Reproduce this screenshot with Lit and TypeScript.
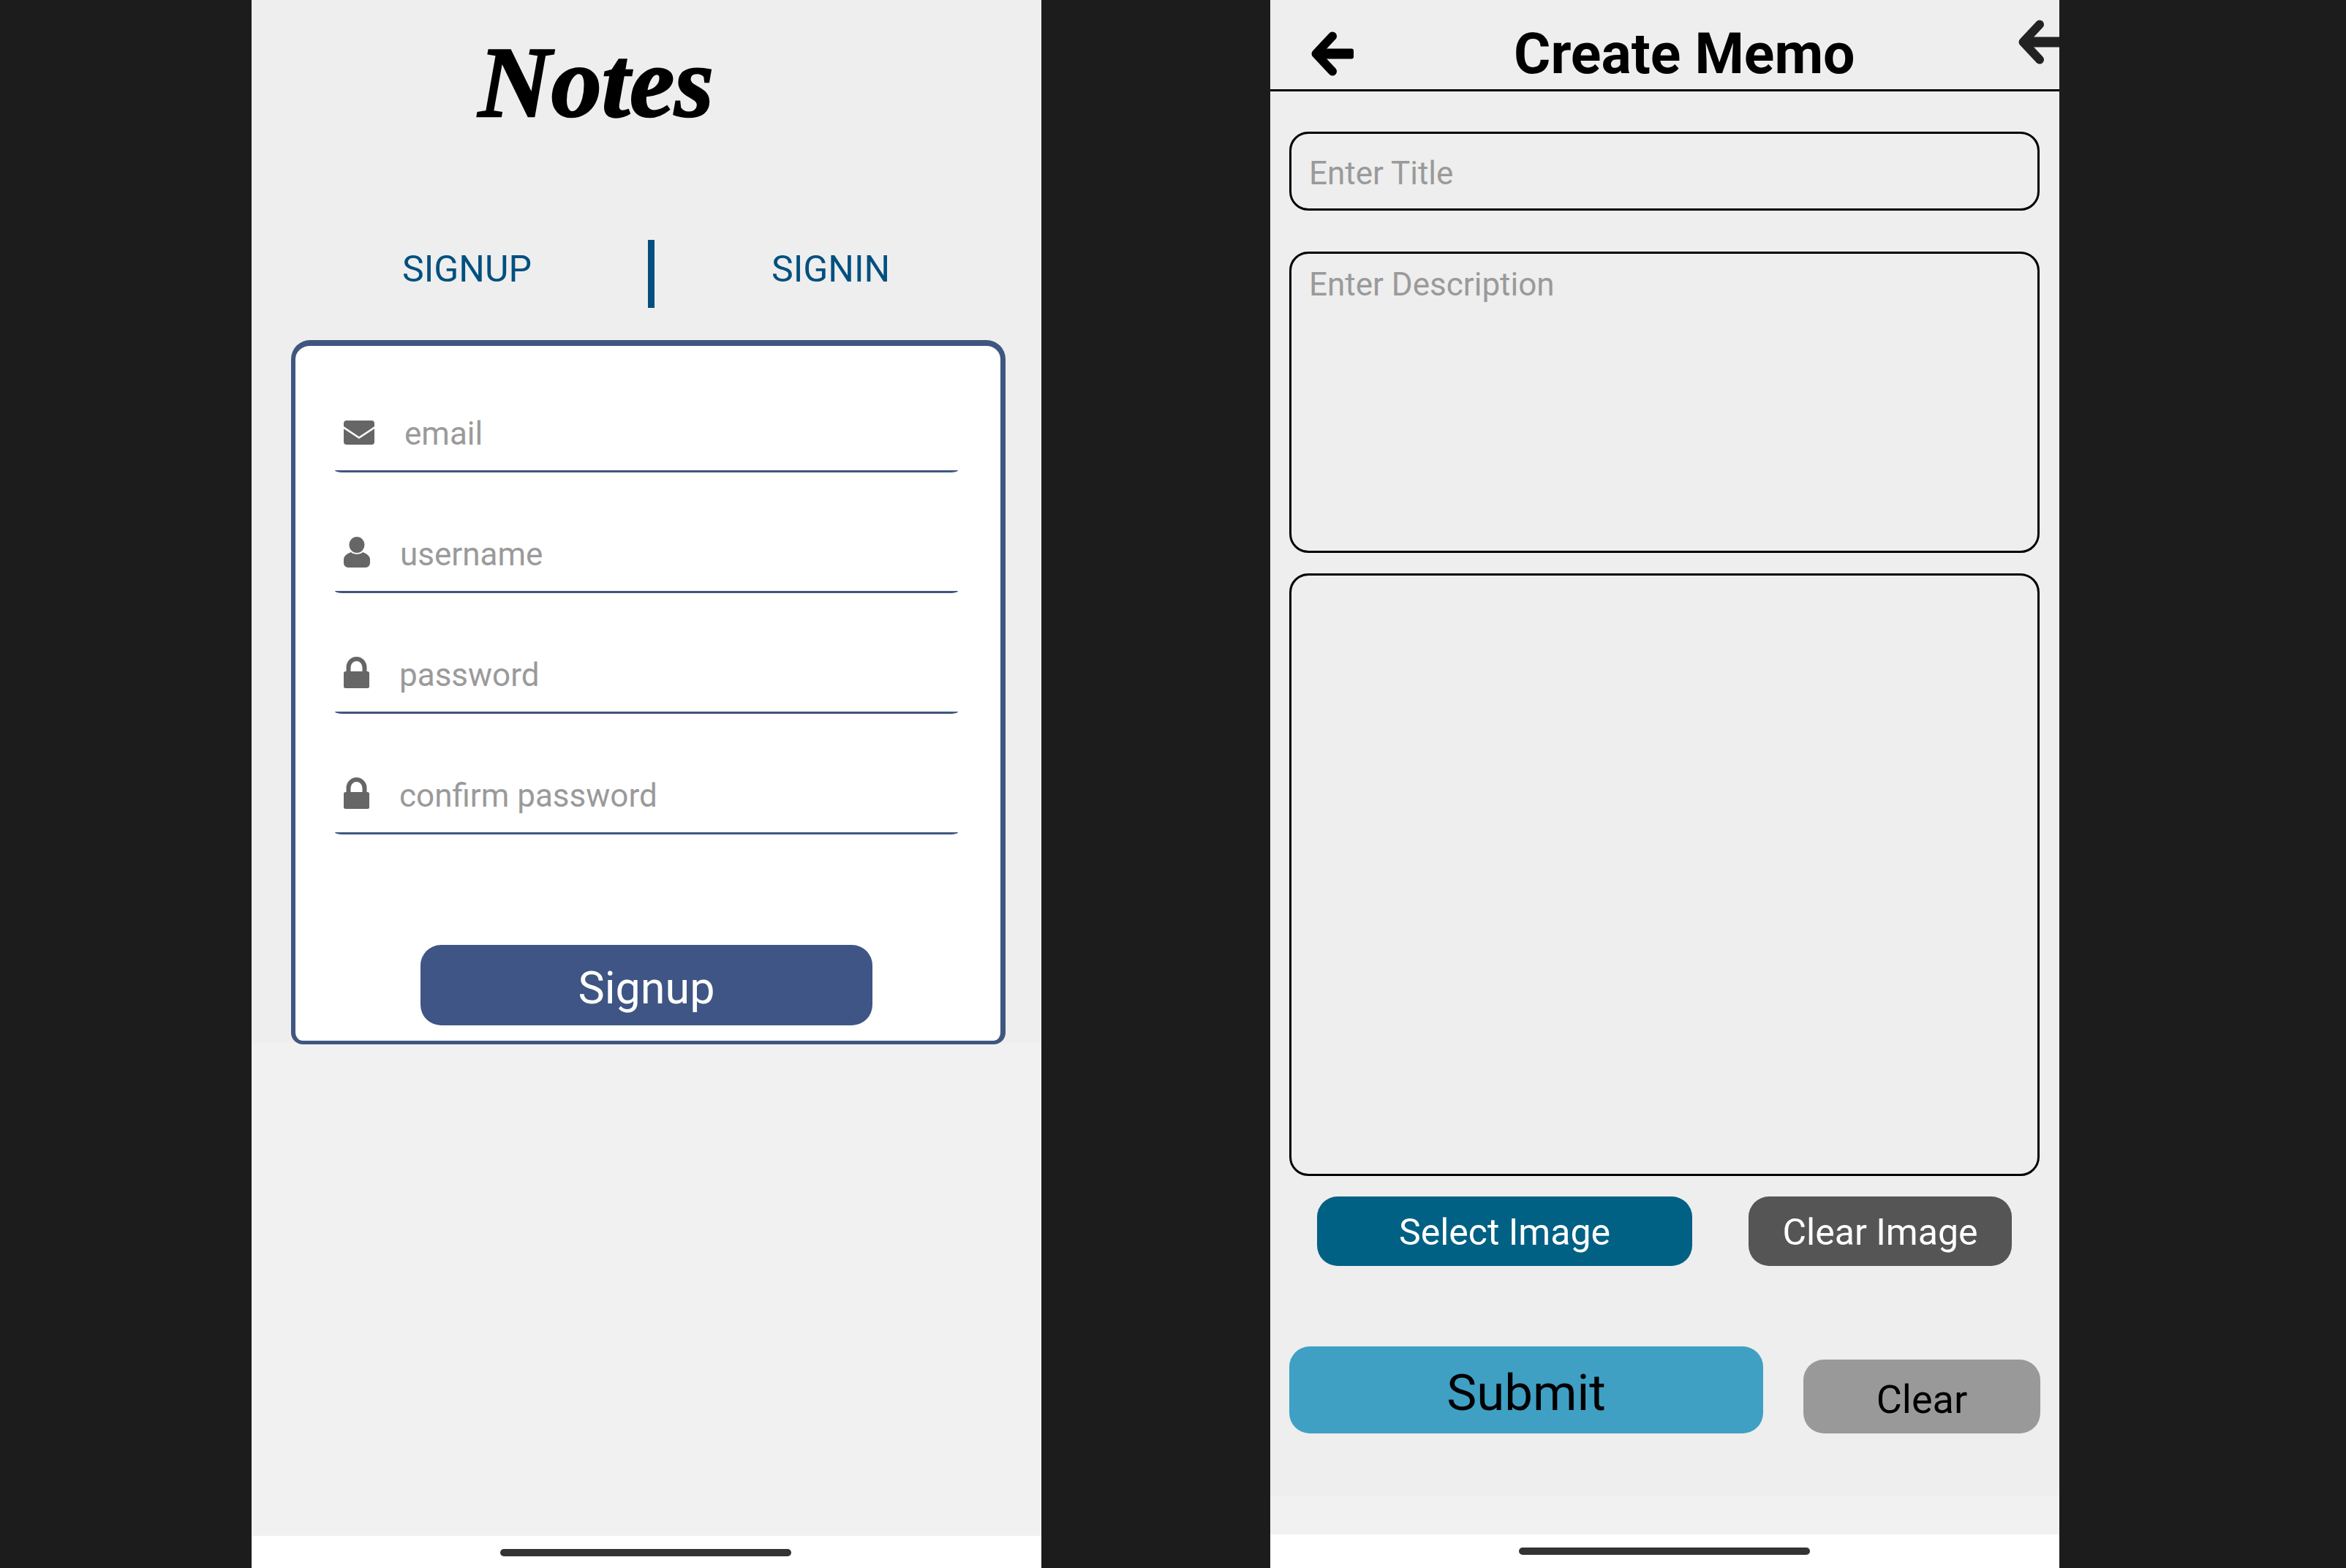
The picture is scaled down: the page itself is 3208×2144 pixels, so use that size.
import { LitElement, html, css, svg } from "lit";
import { customElement } from "lit/decorators.js";

const mail = html`<svg class="ic" width="42" height="33" viewBox="0 0 42 33"><rect width="42" height="33" rx="4" fill="#666"/><path d="M-1 9 L21 23.500 L43 9" fill="none" stroke="#fff" stroke-width="2.600"/></svg>`;
const user = html`<svg class="ic" width="36" height="42" viewBox="0 0 36 42"><path fill="#666" d="M0 36V31C0 26 5 23 10 21C13 24.500 23 24.500 26 21C31 23 36 26 36 31V36A6 6 0 0 1 30 42H6A6 6 0 0 1 0 36Z"/><ellipse cx="18" cy="11" rx="10.500" ry="11" fill="#666"/></svg>`;
const lock = html`<svg class="ic" width="35" height="43" viewBox="0 0 35 43"><path d="M6.500 22V14.500A11 11.500 0 0 1 28.500 14.500V22" fill="none" stroke="#666" stroke-width="6"/><rect y="20" width="35" height="23" rx="2.500" fill="#666"/></svg>`;
const arrowMarks = svg`<path d="M29 6.500L6.500 30.500L29 54.500" fill="none" stroke="currentColor" stroke-width="12" stroke-linecap="round" stroke-linejoin="round"/><rect x="10" y="23.500" width="48" height="14" rx="3" fill="currentColor"/>`;

@customElement("app-root")
export class AppRoot extends LitElement {
  static styles = css`
    :host { display: block; width: 3208px; height: 2144px; background: #1c1c1c; font-family: Roboto, "Liberation Sans", sans-serif; overflow: hidden; }
    .page { display: flex; height: 2144px; }
    .phone { display: flex; flex-direction: column; height: 2144px; position: relative; overflow: hidden; background: #fff; }
    .left { width: 1080px; margin-left: 344px; }
    .right { width: 1079px; margin-left: 313px; }
    .top { background: #eee; flex: none; box-sizing: border-box; }
    .left .top { height: 1426px; padding-top: 39px; }
    .right .top { height: 2045px; }
    .pad { background: #f1f1f1; flex: none; }
    .left .pad { height: 674px; }
    .right .pad { height: 53px; }
    .foot { flex: 1; display: flex; justify-content: center; }
    .bar { width: 398px; height: 10px; border-radius: 5px; background: #333; }
    .left .bar { margin-top: 18px; margin-left: -3px; }
    .right .bar { margin-top: 18px; margin-left: -1px; }

    .brand { font: italic bold 138px/148px "Liberation Serif", serif; color: #000; margin-left: 310px; -webkit-text-stroke: 2.500px #000; }
    .tabs { display: flex; height: 93px; margin-top: 141px; color: #00507f; font-size: 50px; font-weight: 400; }
    .tab { line-height: 81px; }
    .t1 { margin-left: 206px; }
    .t2 { margin-left: 160px; }
    .divider { width: 9px; height: 93px; background: #03507f; margin-left: 159px; }
    .card { box-sizing: border-box; width: 977px; height: 963px; margin: 44px 0 0 54px; background: #fff; border: solid #3f5680; border-width: 8px 7px 5px 6px; border-radius: 26px 26px 16px 16px; padding-top: 8px; position: relative; }
    .row { box-sizing: border-box; width: 852px; height: 165px; margin-left: 54px; padding: 0 0 25px 12px; display: flex; align-items: flex-end; gap: 41px; border-bottom: 3px solid #3f5680; border-radius: 0 0 10px 10px / 0 0 3px 3px; }
    .ic { display: block; flex: none; margin-bottom: 7px; }
    .row.mail .ic { margin-bottom: 10px; }
    .ph { font-size: 44px; line-height: 50px; color: #9a9a9a; white-space: nowrap; }
    .signup { width: 618px; height: 110px; margin: 151px 0 0 171px; box-sizing: border-box; padding-top: 7px; background: #3e5585; border-radius: 28px; color: #fff; font-size: 61px; display: flex; align-items: center; justify-content: center; }

    .head { height: 122px; border-bottom: 3px solid #000; display: flex; position: relative; }
    .back { display: block; flex: none; margin: 43px 0 0 56px; color: #000; }
    .title { margin-left: 219px; font-size: 77px; font-weight: 700; line-height: 74px; padding-top: 37px; color: #000; white-space: nowrap; }
    .back2 { position: absolute; left: 1023px; top: 27px; margin: 0; color: #222; }
    .body { padding-left: 26px; }
    .box { box-sizing: border-box; width: 1026px; border: 3px solid #000; border-radius: 26px; padding-left: 24px; }
    .b1 { height: 108px; margin-top: 55px; padding-top: 29px; }
    .b2 { height: 412px; margin-top: 56px; padding-top: 17px; }
    .b3 { height: 824px; margin-top: 28px; }
    .btn { display: flex; align-items: center; justify-content: center; box-sizing: border-box; flex: none; white-space: nowrap; }
    .imgs { display: flex; margin: 28px 0 0 38px; }
    .imgs .btn { height: 95px; border-radius: 28px; color: #fff; font-size: 50px; padding-top: 2px; }
    .sel { width: 513px; background: #006184; }
    .clr { width: 360px; margin-left: 77px; background: #555; }
    .acts { display: flex; align-items: flex-end; margin-top: 110px; color: #000; }
    .sub { width: 648px; height: 119px; background: #3fa0c4; border-radius: 28px; font-size: 69px; padding-top: 7px; }
    .cl { width: 324px; height: 101px; margin-left: 55px; background: #999; border-radius: 28px; font-size: 54px; padding-top: 8px; }
  `;

  private field(icon: unknown, text: string, cls = "") {
    return html`<div class="row ${cls}">${icon}<span class="ph">${text}</span></div>`;
  }

  render() {
    return html`<div class="page">
      <section class="phone left">
        <div class="top">
          <div class="brand">Notes</div>
          <div class="tabs">
            <span class="tab t1">SIGNUP</span>
            <span class="divider"></span>
            <span class="tab t2">SIGNIN</span>
          </div>
          <div class="card">
            ${this.field(mail, "email", "mail")}
            ${this.field(user, "username")}
            ${this.field(lock, "password")}
            ${this.field(lock, "confirm password")}
            <div class="signup">Signup</div>
          </div>
        </div>
        <div class="pad"></div>
        <div class="foot"><div class="bar"></div></div>
      </section>
      <section class="phone right">
        <div class="top">
          <div class="head">
            <svg class="back" width="58" height="61" viewBox="0 0 58 61">${arrowMarks}</svg>
            <div class="title">Create Memo</div>
            <svg class="back2 back" width="58" height="61" viewBox="0 0 58 61">${arrowMarks}</svg>
          </div>
          <div class="body">
            <div class="box b1"><div class="ph">Enter Title</div></div>
            <div class="box b2"><div class="ph">Enter Description</div></div>
            <div class="box b3"></div>
            <div class="imgs">
              <div class="btn sel">Select Image</div>
              <div class="btn clr">Clear Image</div>
            </div>
            <div class="acts">
              <div class="btn sub">Submit</div>
              <div class="btn cl">Clear</div>
            </div>
          </div>
        </div>
        <div class="pad"></div>
        <div class="foot"><div class="bar"></div></div>
      </section>
    </div>`;
  }
}
